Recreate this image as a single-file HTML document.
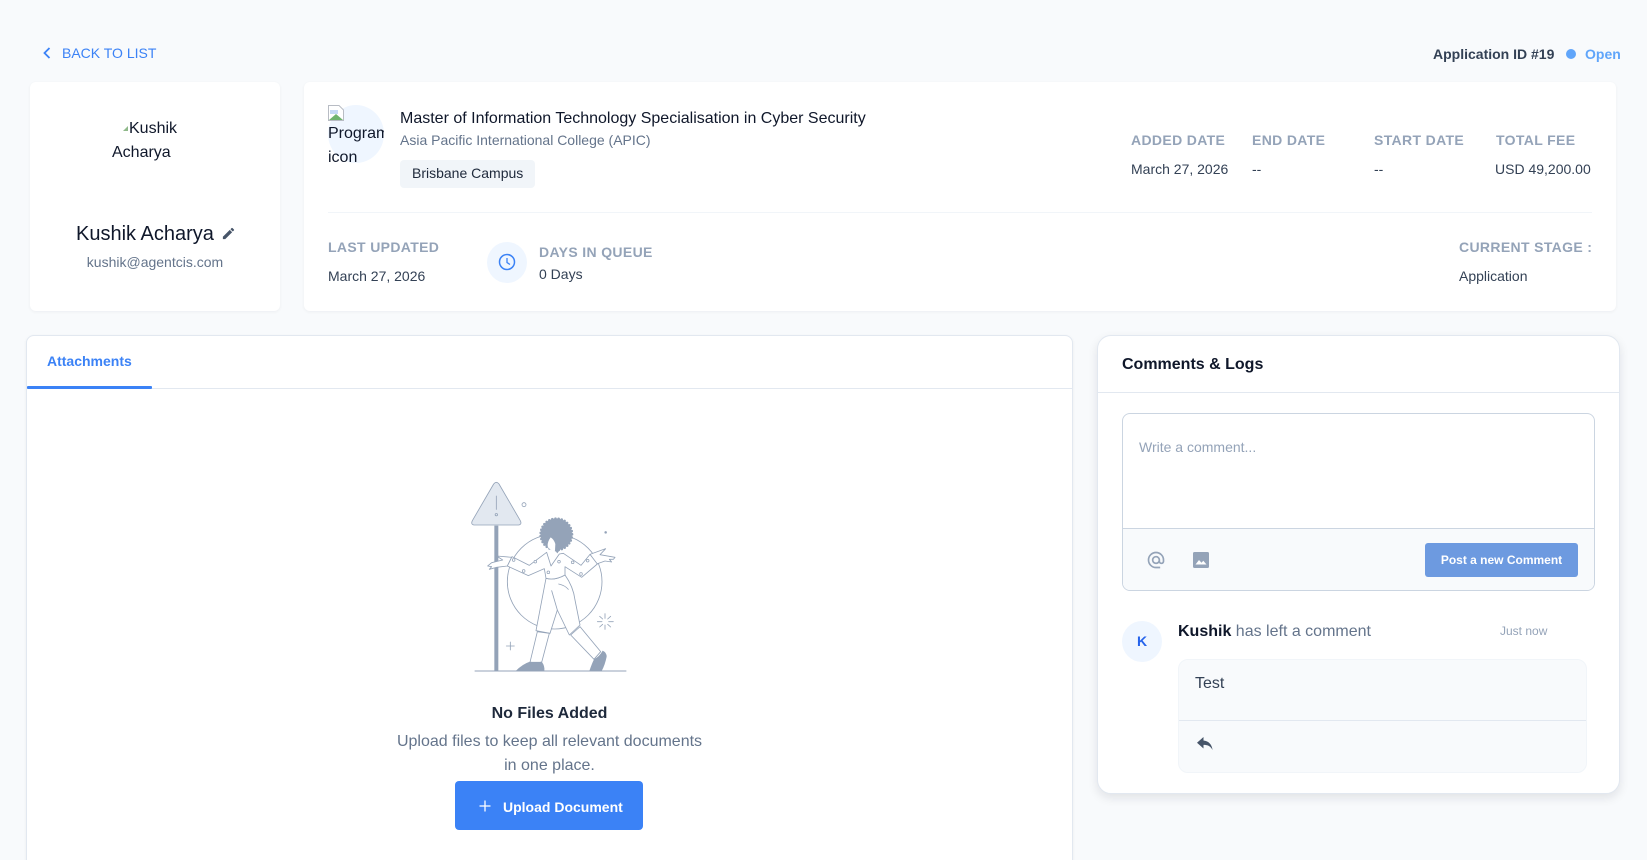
<!DOCTYPE html>
<html lang="en">
<head>
<meta charset="utf-8">
<title>Application</title>
<style>
html,body{margin:0;padding:0;width:1647px;height:860px;overflow:hidden;background:#f8fafc;font-family:"Liberation Sans",Arial,sans-serif;color:#334155}
#w{position:relative;width:1647px;height:860px;overflow:hidden}
.a{position:absolute;white-space:nowrap;line-height:20px;font-size:14px}
.box{position:absolute;box-sizing:border-box;background:#fff}
.card{border-radius:6px;box-shadow:0 1px 3px rgba(15,23,42,.05)}
.lbl{font-weight:700;color:#94a3b8;letter-spacing:.35px}
svg{position:absolute;display:block}
</style>
</head>
<body>
<div id="w">
<svg style="left:42px;top:46px" width="10" height="14" viewBox="0 0 10 14"><path d="M7.500 2 L2.500 7 L7.500 12" fill="none" stroke="#3b82f6" stroke-width="1.800"/></svg>
<div class="a" style="left:62px;top:43px;color:#3b82f6">BACK TO LIST</div>
<div class="a" style="left:1433px;top:44px;font-weight:700;color:#334155">Application ID #19</div>
<div style="position:absolute;left:1566px;top:49px;width:10px;height:10px;border-radius:50%;background:#60a5fa"></div>
<div class="a" style="left:1585px;top:44px;font-weight:700;color:#60a5fa">Open</div>

<div class="box card" style="left:30px;top:82px;width:250px;height:229px"></div>
<svg style="left:122px;top:123px" width="7" height="9" viewBox="0 0 7 9"><path d="M1 8 L6 3 V8 Z" fill="#8fb98a"/></svg>
<div class="a" style="left:129px;top:117px;font-size:16px;line-height:24px;color:#0f172a">Kushik</div>
<div class="a" style="left:112px;top:141px;font-size:16px;line-height:24px;color:#0f172a">Acharya</div>
<div class="a" style="left:76px;top:221px;font-size:20px;line-height:26px;color:#0f172a">Kushik Acharya</div>
<svg style="left:221px;top:226px" width="15" height="15" viewBox="0 0 24 24"><path d="M3 17.250V21h3.750L17.810 9.940l-3.750-3.750L3 17.250zM20.710 7.040a1 1 0 0 0 0-1.410l-2.340-2.340a1 1 0 0 0-1.410 0l-1.830 1.830 3.750 3.750 1.830-1.830z" fill="#475569"/></svg>
<div class="a" style="left:30px;width:250px;text-align:center;top:252px;color:#64748b">kushik@agentcis.com</div>

<div class="box card" style="left:304px;top:82px;width:1312px;height:229px"></div>
<div style="position:absolute;left:328px;top:105px;width:56px;height:58px;border-radius:50%;background:#eff6ff"></div>
<div style="position:absolute;left:328px;top:105px;width:56px;height:57px;overflow:hidden;font-size:16px;line-height:24px;color:#0f172a">
  <svg style="left:0;top:0" width="16" height="16" viewBox="0 0 16 16"><path d="M.5.5H11L15.500 5V15.500H.5Z" fill="#fff" stroke="#b8bcc4"/><path d="M2 5h8v4H2z" fill="#c5d8f5"/><path d="M1 15 L8 9 L15 15Z" fill="#6fb36f"/></svg>
  <div style="position:absolute;left:0;top:17px;white-space:nowrap">Program</div>
  <div style="position:absolute;left:0;top:41px;white-space:nowrap">icon</div>
</div>
<div class="a" style="left:400px;top:108px;font-size:16px;line-height:22px;color:#0f172a">Master of Information Technology Specialisation in Cyber Security</div>
<div class="a" style="left:400px;top:130px;color:#64748b">Asia Pacific International College (APIC)</div>
<div style="position:absolute;left:400px;top:160px;width:135px;height:28px;border-radius:4px;background:#f1f5f9"></div>
<div class="a" style="left:412px;top:163px;color:#1e293b">Brisbane Campus</div>

<div class="a lbl" style="left:1131px;top:130px">ADDED DATE</div>
<div class="a lbl" style="left:1252px;top:130px">END DATE</div>
<div class="a lbl" style="left:1374px;top:130px">START DATE</div>
<div class="a lbl" style="left:1496px;top:130px">TOTAL FEE</div>
<div class="a" style="left:1131px;top:159px">March 27, 2026</div>
<div class="a" style="left:1252px;top:159px">--</div>
<div class="a" style="left:1374px;top:159px">--</div>
<div class="a" style="left:1495px;top:159px">USD 49,200.00</div>

<div style="position:absolute;left:328px;top:212px;width:1264px;height:1px;background:#f1f5f9"></div>

<div class="a lbl" style="left:328px;top:237px">LAST UPDATED</div>
<div class="a" style="left:328px;top:266px">March 27, 2026</div>
<div style="position:absolute;left:487px;top:242px;width:40px;height:41px;border-radius:50%;background:#eff6ff"></div>
<svg style="left:497px;top:252px" width="20" height="20" viewBox="0 0 20 20"><circle cx="10" cy="10" r="7.500" fill="none" stroke="#3b82f6" stroke-width="1.500"/><path d="M10 6V10.500L13 12.500" fill="none" stroke="#3b82f6" stroke-width="1.300"/></svg>
<div class="a lbl" style="left:539px;top:242px">DAYS IN QUEUE</div>
<div class="a" style="left:539px;top:264px">0 Days</div>
<div class="a lbl" style="left:1459px;top:237px">CURRENT STAGE :</div>
<div class="a" style="left:1459px;top:266px">Application</div>

<div class="box" style="left:26px;top:335px;width:1047px;height:545px;border:1px solid #e2e8f0;border-radius:8px;box-shadow:0 1px 3px rgba(15,23,42,.06)"></div>
<div style="position:absolute;left:27px;top:388px;width:1045px;height:1px;background:#e2e8f0"></div>
<div style="position:absolute;left:27px;top:386px;width:125px;height:3px;background:#3b82f6;border-radius:1px"></div>
<div class="a" style="left:47px;top:351px;font-weight:700;color:#3b82f6">Attachments</div>

<svg style="left:450px;top:460px" width="220" height="230" viewBox="0 0 660 690">
  <g fill="none" stroke="#94a3b8" stroke-width="2.500" stroke-linejoin="round" stroke-linecap="round">
    <circle cx="314" cy="365" r="142"/>
    <rect x="133" y="197" width="12" height="436" fill="#94a3b8" stroke="none"/>
    <path d="M131 72 Q139 62 147 72 L211 182 Q217 195 203 195 H75 Q61 195 67 182 Z" fill="#e2e8f0"/>
    <path d="M139 108V148"/>
    <circle cx="139" cy="164" r="3.500"/>
    <circle cx="222" cy="134" r="6"/>
    <circle cx="467" cy="217" r="2.500" fill="#94a3b8"/>
    <path d="M75 633H528" stroke-width="3"/>
    <path d="M181 546V570M169 558H193"/>
    <path d="M465 461V475M465 495V508M442 485H456M476 485H490M449 469L458 477M473 493L482 501M449 501L458 493M473 477L482 469"/>
    <path d="M288 355 L258 512 L300 520 L322 450 L358 525 L390 495 L375 420 Q370 380 345 345 Q315 362 288 355Z" fill="#fff"/>
    <path d="M305 392 L322 450"/>
    <path d="M326 372 Q345 376 355 388"/>
    <path d="M262 515 L240 607 H275 L298 520Z" fill="#fff"/>
    <path d="M362 525 L432 598 L452 575 L390 500Z" fill="#fff"/>
    <path d="M185 292 L140 288 L158 300 L125 308 L113 318 L125 320 L118 328 L140 322 L172 318Z" fill="#fff"/>
    <path d="M420 283 L467 266 L450 284 L495 292 L490 298 L478 298 L485 306 L465 303 L440 312Z" fill="#fff"/>
    <path d="M186 290 L238 316 L290 277 L303 318 L328 282 L340 280 L393 316 L420 283 L442 312 L395 352 L345 320 L345 345 Q315 362 288 355 L283 326 L235 347 L172 318Z" fill="#fff"/>
    <g fill="#fff" stroke-width="2.200"><circle cx="191" cy="300" r="4"/><circle cx="256" cy="305" r="4"/><circle cx="221" cy="333" r="4"/><circle cx="295" cy="337" r="4"/><circle cx="327" cy="305" r="4"/><circle cx="368" cy="307" r="4"/><circle cx="413" cy="302" r="4"/><circle cx="393" cy="342" r="4"/></g>
  </g>
  <circle cx="319" cy="223" r="47" fill="#94a3b8" stroke="#94a3b8" stroke-width="8" stroke-linecap="round" stroke-dasharray="0 9.500"/>
  <path d="M292 250 L322 250 L335 262 L322 280 L314 270 L300 258Z" fill="#94a3b8"/>
  <path d="M302 232 Q292 245 293 258 Q294 266 303 268 L305 284 L315 272 L316 252 Q312 238 302 232Z" fill="#fff"/>
  <path d="M197 633 Q218 612 240 605 Q258 610 275 605 Q285 618 283 633Z M418 633 Q425 612 432 598 Q448 590 458 572 Q470 578 470 590 Q465 615 455 633Z" fill="#94a3b8"/>
</svg>

<div class="a" style="left:27px;width:1045px;text-align:center;top:702px;margin-top:2px;font-size:16px;font-weight:700;color:#1e293b">No Files Added</div>
<div class="a" style="left:27px;width:1045px;text-align:center;top:730px;font-size:16px;line-height:24px;color:#64748b">Upload files to keep all relevant documents</div>
<div class="a" style="left:27px;width:1045px;text-align:center;top:754px;font-size:16px;line-height:24px;color:#64748b">in one place.</div>
<div style="position:absolute;left:455px;top:781px;width:188px;height:49px;background:#3b82f6;border-radius:4px"></div>
<svg style="left:478px;top:799px" width="14" height="14" viewBox="0 0 14 14"><path d="M7 1.500V12.500M1.500 7H12.500" stroke="#fff" stroke-width="1.300" fill="none"/></svg>
<div class="a" style="left:503px;top:797px;font-weight:700;color:#fff">Upload Document</div>

<div class="box" style="left:1097px;top:335px;width:523px;height:459px;border:1px solid #e2e8f0;border-radius:14px;box-shadow:0 4px 10px rgba(15,23,42,.1)"></div>
<div class="a" style="left:1122px;top:355px;font-size:16px;font-weight:700;color:#0f172a">Comments &amp; Logs</div>
<div style="position:absolute;left:1098px;top:392px;width:521px;height:1px;background:#e2e8f0"></div>

<div class="box" style="left:1122px;top:413px;width:473px;height:178px;border:1px solid #cbd5e1;border-radius:8px;overflow:hidden">
  <div style="position:absolute;left:0;top:114px;width:100%;height:64px;background:#f8fafc;border-top:1px solid #cbd5e1"></div>
</div>
<div class="a" style="left:1139px;top:437px;color:#94a3b8">Write a comment...</div>
<svg style="left:1146px;top:550px" width="20" height="20" viewBox="0 0 24 24"><path d="M12 2a10 10 0 1 0 0 20h5v-2h-5a8 8 0 1 1 8-8v1.430c0 .79-.71 1.570-1.500 1.570s-1.500-.78-1.500-1.570V12a5 5 0 1 0-1.460 3.530A3.700 3.700 0 0 0 18.500 17c1.970 0 3.500-1.600 3.500-3.570V12A10 10 0 0 0 12 2zm0 13a3 3 0 1 1 0-6 3 3 0 0 1 0 6z" fill="#94a3b8"/></svg>
<svg style="left:1193px;top:552px" width="16" height="16" viewBox="0 0 16 16"><rect width="16" height="16" rx="1.500" fill="#94a3b8"/><path d="M2.500 12.500L6 8L8.500 10.800L10.300 8.800L13.500 12.500Z" fill="#fff"/></svg>
<div style="position:absolute;left:1425px;top:543px;width:153px;height:34px;background:#6d9ae0;border-radius:3px"></div>
<div class="a" style="left:1425px;width:153px;text-align:center;top:550px;font-size:12px;font-weight:700;color:#fff">Post a new Comment</div>

<div style="position:absolute;left:1122px;top:621px;width:40px;height:41px;border-radius:50%;background:#eff6ff"></div>
<div class="a" style="left:1122px;width:40px;text-align:center;top:631px;font-weight:700;color:#2563eb">K</div>
<div class="a" style="left:1178px;top:622px;font-size:16px"><b style="color:#0f172a">Kushik</b> <span style="color:#64748b">has left a comment</span></div>
<div class="a" style="left:1500px;top:621px;font-size:12px;color:#94a3b8">Just now</div>
<div class="box" style="left:1178px;top:659px;width:409px;height:114px;background:#f8fafc;border:1px solid #f1f5f9;border-radius:10px"></div>
<div style="position:absolute;left:1179px;top:720px;width:407px;height:1px;background:#e2e8f0"></div>
<div class="a" style="left:1195px;top:674px;font-size:16px;color:#334155">Test</div>
<svg style="left:1196px;top:736px" width="18" height="16" viewBox="0 0 18 16"><path d="M7.500 4.500V1L1 6.800L7.500 12.500V8.900C11.500 8.900 14.500 10 16.500 14C16 9 13 5 7.500 4.500Z" fill="#475569"/></svg>
</div>
</body>
</html>
